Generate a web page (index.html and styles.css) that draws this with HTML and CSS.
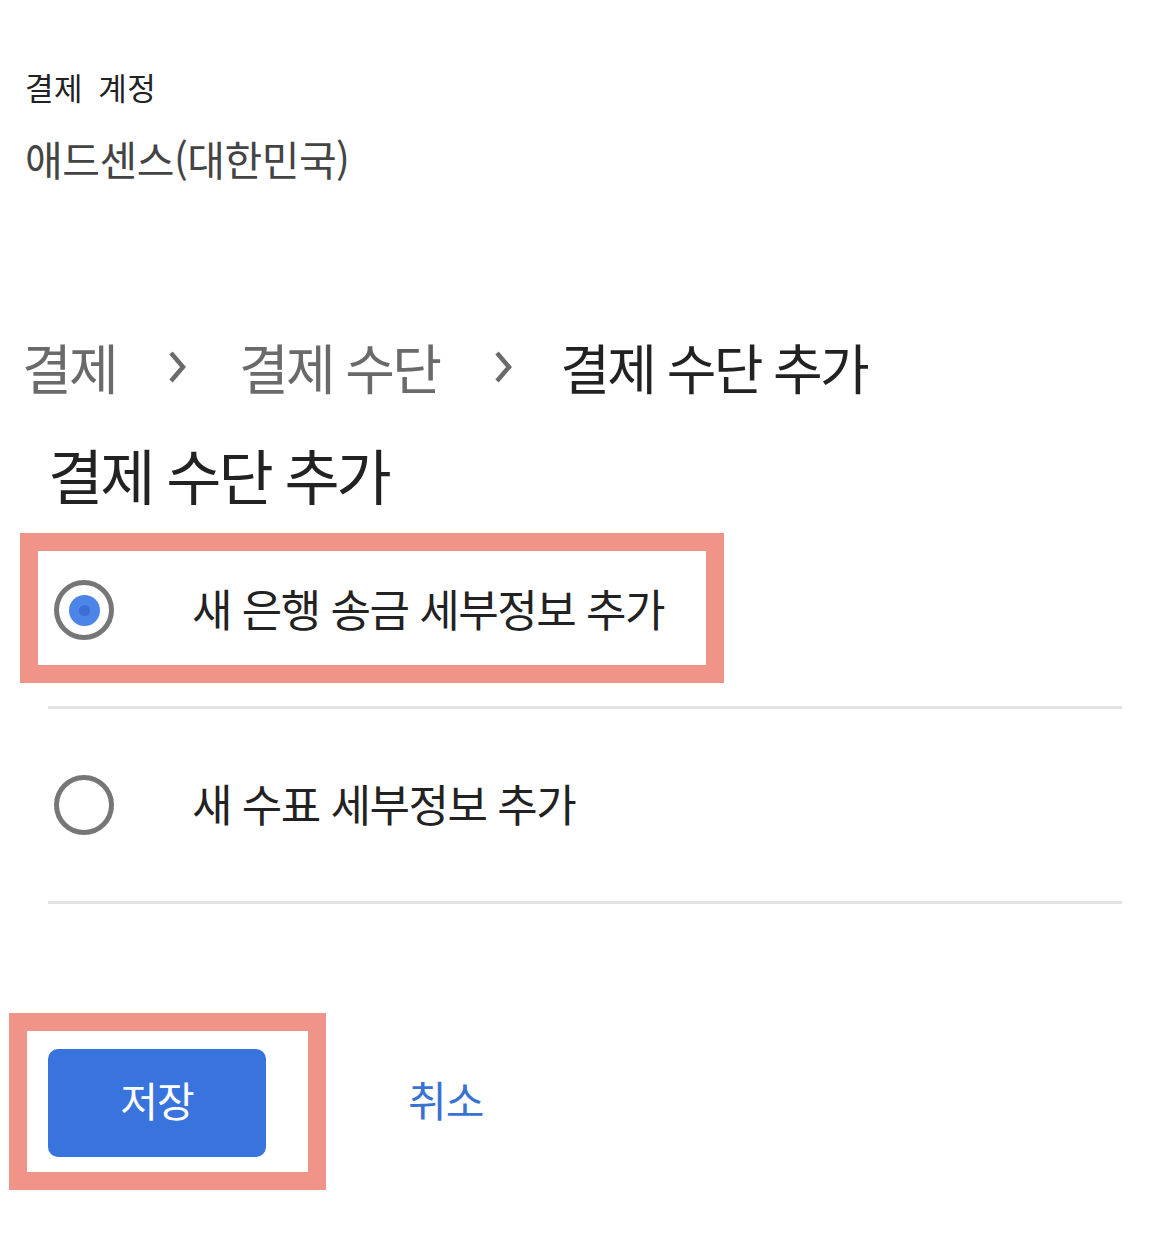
FILE: index.html
```html
<!DOCTYPE html>
<html lang="ko">
<head>
<meta charset="utf-8">
<title>결제 수단 추가</title>
<link rel="stylesheet" href="styles.css">
</head>
<body>
<div class="page">
  <div class="account">
    <div class="acct-label">결제 계정</div>
    <div class="acct-name">애드센스(대한민국)</div>
  </div>

  <nav class="crumbs">
    <span class="crumb">결제</span>
    <svg class="chev first" viewBox="0 0 20 34" width="20" height="34"><path d="M4 3 L16 17 L4 31" fill="none" stroke="#6b6b6b" stroke-width="4.5"/></svg>
    <span class="crumb">결제 수단</span>
    <svg class="chev second" viewBox="0 0 20 34" width="20" height="34"><path d="M4 3 L16 17 L4 31" fill="none" stroke="#6b6b6b" stroke-width="4.5"/></svg>
    <span class="crumb current">결제 수단 추가</span>
  </nav>

  <h1 class="title">결제 수단 추가</h1>

  <div class="options">
    <div class="option marked">
      <span class="radio checked"><span class="dot"></span></span>
      <span class="opt-text">새 은행 송금 세부정보 추가</span>
    </div>
    <div class="option">
      <span class="radio"></span>
      <span class="opt-text">새 수표 세부정보 추가</span>
    </div>
  </div>

  <div class="actions">
    <div class="save-wrap">
      <button class="save">저장</button>
    </div>
    <button class="cancel">취소</button>
  </div>
</div>
</body>
</html>
```

FILE: styles.css
```css
*, *::before, *::after { box-sizing: border-box; }
html, body { margin: 0; padding: 0; background: #fff; }
body {
  font-family: "Noto Sans CJK KR", "Noto Sans", sans-serif;
  color: #222;
}
.page { width: 1169px; min-height: 1239px; }

.account { padding: 67px 0 0 25px; }
.acct-label {
  font-size: 31px;
  line-height: 40px;
  color: #222;
  letter-spacing: 0.5px;
  word-spacing: 6px;
}
.acct-name {
  margin-top: 26px;
  font-size: 41px;
  line-height: 50px;
  color: #444;
  letter-spacing: -0.5px;
}

.crumbs {
  margin-top: 154px;
  padding-left: 22px;
  display: flex;
  align-items: center;
  height: 60px;
}
.crumb {
  font-size: 54px;
  line-height: 60px;
  color: #6a6a6a;
  letter-spacing: -2.7px;
}
.crumb.current { color: #222; }
.chev { flex: none; }
.chev.first { margin: 0 52px 0 51px; }
.chev.second { margin: 0 47px 0 54px; }

.title {
  margin: 45px 0 8px 48px;
  font-weight: normal;
  font-size: 60px;
  line-height: 64px;
  color: #222;
  letter-spacing: -3px;
}

.options { margin-left: 48px; width: 1074px; }
.option {
  position: relative;
  height: 195px;
  display: flex;
  align-items: center;
  padding-left: 6px;
  border-bottom: 3px solid #e2e2e2;
}
.radio {
  position: relative;
  flex: none;
  width: 60px;
  height: 60px;
  border: 5px solid #767676;
  border-radius: 50%;
  display: flex;
  align-items: center;
  justify-content: center;
}
.radio.checked::before {
  content: "";
  position: absolute;
  left: 50%;
  top: 50%;
  width: 31px;
  height: 31px;
  margin: -15.5px 0 0 -15.5px;
  border-radius: 50%;
  background: #4d84e8;
}
.dot {
  position: relative;
  z-index: 1;
  width: 11px;
  height: 11px;
  border-radius: 50%;
  background: #3d6ed2;
}
.opt-text {
  margin-left: 78px;
  margin-bottom: 4px;
  font-size: 44px;
  line-height: 50px;
  color: #222;
  letter-spacing: -1.5px;
}
.option.marked::after {
  content: "";
  position: absolute;
  left: -28px;
  top: 19px;
  width: 704px;
  height: 150px;
  border: 18px solid #f09388;
  pointer-events: none;
}

.actions {
  margin-top: 145px;
  padding-left: 48px;
  display: flex;
  align-items: center;
}
.save-wrap { position: relative; display: flex; }
.save-wrap::after {
  content: "";
  position: absolute;
  left: -39px;
  top: -36px;
  width: 317px;
  height: 177px;
  border: 18px solid #f09388;
  pointer-events: none;
}
.save {
  width: 218px;
  height: 108px;
  border: none;
  border-radius: 10px;
  background: #3873de;
  color: #fff;
  font-family: inherit;
  font-size: 41px;
  line-height: 50px;
  letter-spacing: -1px;
  padding: 0 0 8px;
}
.cancel {
  margin-left: 142px;
  margin-bottom: 8px;
  background: none;
  border: none;
  padding: 0;
  font-family: inherit;
  font-size: 42px;
  line-height: 50px;
  color: #3a72d2;
  letter-spacing: -1px;
}
```
